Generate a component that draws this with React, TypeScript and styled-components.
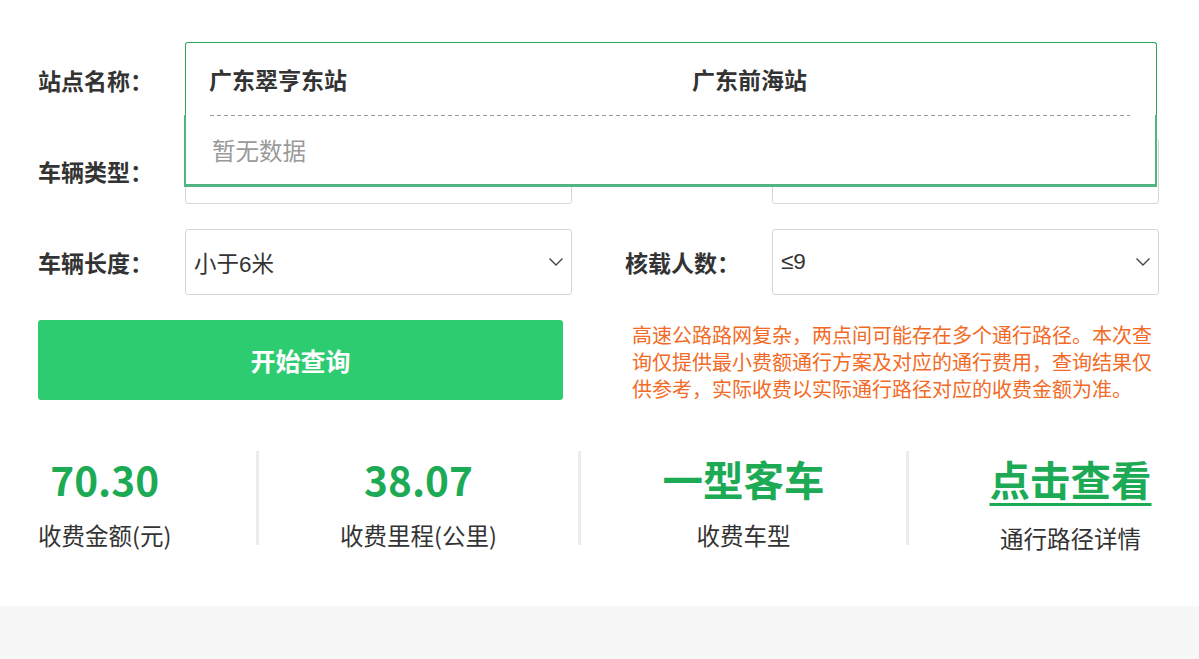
import React from "react";
import styled, { createGlobalStyle } from "styled-components";

const GlobalStyle = createGlobalStyle`
  html, body {
    margin: 0;
    padding: 0;
    background: #ffffff;
    overflow: hidden;
  }
  body {
    font-family: "Noto Sans CJK SC", "Noto Sans", sans-serif;
    color: #333333;
  }
`;

const Page = styled.div`
  width: 1199px;
  min-height: 659px;
  display: flex;
  flex-direction: column;
`;

const Main = styled.main`
  padding: 47px 0 56px 38px;
  display: flex;
  flex-direction: column;
`;

const Form = styled.div`
  display: flex;
  flex-direction: column;
  gap: 25px;
`;

const Row = styled.div`
  display: grid;
  grid-template-columns: 147px 387px 53px 147px 387px;
  align-items: center;
  height: 66px;
`;

const Label = styled.label<{ col?: number }>`
  grid-column: ${({ col }) => col ?? 1};
  font-size: 23px;
  font-weight: 700;
  color: #333333;
  white-space: nowrap;
`;

const StationWrap = styled.div`
  grid-column: 2 / 6;
  position: relative;
  height: 66px;
  width: 972px;
`;

const Dropdown = styled.div`
  position: absolute;
  top: -5px;
  left: 0;
  width: 972px;
  z-index: 5;
  background: #ffffff;
`;

const StationInput = styled.div`
  box-sizing: border-box;
  height: 73px;
  display: grid;
  grid-template-columns: 483px 1fr;
  align-items: center;
  padding-left: 23px;
  border: 1px solid #2aa65e;
  border-bottom: none;
  border-radius: 3px 3px 0 0;
`;

const StationName = styled.span`
  font-size: 23px;
  font-weight: 700;
  color: #333333;
`;

const StationList = styled.div`
  box-sizing: border-box;
  height: 72px;
  border: 2px solid #4fb482;
  border-top: none;
  border-bottom-width: 3px;
  margin-left: -1px;
  padding: 0 25px 0 24px;
  display: flex;
  flex-direction: column;
`;

const DashedLine = styled.div`
  height: 1px;
  background-image: linear-gradient(to right, #9a9a9a 60%, transparent 40%);
  background-size: 7px 1px;
`;

const Empty = styled.div`
  flex: 1;
  display: flex;
  align-items: center;
  padding-left: 2px;
  font-size: 23.5px;
  color: #9a9a9a;
`;

const Select = styled.div<{ col: number }>`
  grid-column: ${({ col }) => col};
  box-sizing: border-box;
  height: 66px;
  border: 1px solid #d6d6d6;
  border-radius: 3px;
  display: flex;
  align-items: center;
  justify-content: space-between;
  padding: 0 7px 0 8px;
  font-family: "Liberation Sans", "Noto Sans CJK SC", sans-serif;
  font-size: 22.5px;
  color: #333333;
  background: #ffffff;
`;

const Chevron = () => (
  <svg width="16" height="10" viewBox="0 0 16 10">
    <polyline
      points="1.5,1.5 8,8 14.5,1.5"
      fill="none"
      stroke="#444"
      strokeWidth="1.4"
    />
  </svg>
);

const ActionRow = styled.div`
  display: grid;
  grid-template-columns: 525px 528px;
  column-gap: 69px;
  margin-top: 25px;
  align-items: start;
`;

const QueryButton = styled.button`
  height: 80px;
  border: none;
  border-radius: 3px;
  background: #2ecc71;
  color: #ffffff;
  font-family: inherit;
  font-size: 25px;
  font-weight: 700;
  cursor: pointer;
`;

const Notice = styled.p`
  margin: 1px 0 0;
  font-size: 20px;
  line-height: 27px;
  color: #f26b26;
`;

const Stats = styled.div`
  display: flex;
  margin-top: 49px;
`;

const StatItem = styled.div<{ w: number; first?: boolean }>`
  box-sizing: border-box;
  flex: 0 0 ${({ w }) => w}px;
  height: 94px;
  display: flex;
  justify-content: ${({ first }) => (first ? "flex-start" : "center")};
  border-left: ${({ first }) => (first ? "none" : "3px solid #ececec")};
`;

const StatInner = styled.div`
  display: flex;
  flex-direction: column;
  align-items: center;
`;

const StatValue = styled.div<{ link?: boolean }>`
  font-size: 40.5px;
  line-height: 56px;
  font-weight: 700;
  color: #1daa55;
  white-space: nowrap;
  text-decoration: ${({ link }) => (link ? "underline" : "none")};
  text-decoration-thickness: 3px;
  text-underline-offset: 7px;
  cursor: ${({ link }) => (link ? "pointer" : "default")};
`;

const StatLabel = styled.div<{ shift?: number }>`
  margin-top: ${({ shift }) => 14 + (shift ?? 0)}px;
  font-size: 23.5px;
  line-height: 28px;
  color: #333333;
  white-space: nowrap;
`;

const Footer = styled.footer`
  margin-top: auto;
  height: 53px;
  background: #f7f7f7;
`;

const stats = [
  { value: "70.30", label: "收费金额(元)", w: 218 },
  { value: "38.07", label: "收费里程(公里)", w: 322 },
  { value: "一型客车", label: "收费车型", w: 328 },
  { value: "点击查看", label: "通行路径详情", w: 326, link: true },
];

export default function App() {
  return (
    <Page>
      <GlobalStyle />
      <Main>
        <Form>
          <Row>
            <Label>站点名称：</Label>
            <StationWrap>
              <Dropdown>
                <StationInput>
                  <StationName>广东翠亨东站</StationName>
                  <StationName>广东前海站</StationName>
                </StationInput>
                <StationList>
                  <DashedLine />
                  <Empty>暂无数据</Empty>
                </StationList>
              </Dropdown>
            </StationWrap>
          </Row>
          {/* this row sits under the open station dropdown */}
          <Row>
            <Label>车辆类型：</Label>
            <Select col={2}>
              <span />
              <Chevron />
            </Select>
            <Select col={5}>
              <span />
              <Chevron />
            </Select>
          </Row>
          <Row>
            <Label>车辆长度：</Label>
            <Select col={2}>
              <span>小于6米</span>
              <Chevron />
            </Select>
            <Label col={4}>核载人数：</Label>
            <Select col={5}>
              <span>≤9</span>
              <Chevron />
            </Select>
          </Row>
        </Form>

        <ActionRow>
          <QueryButton>开始查询</QueryButton>
          <Notice>
            高速公路路网复杂，两点间可能存在多个通行路径。本次查询仅提供最小费额通行方案及对应的通行费用，查询结果仅供参考，实际收费以实际通行路径对应的收费金额为准。
          </Notice>
        </ActionRow>

        <Stats>
          {stats.map((s, i) => (
            <StatItem key={s.label} w={s.w} first={i === 0}>
              <StatInner>
                <StatValue link={s.link}>{s.value}</StatValue>
                <StatLabel shift={s.link ? 3 : 0}>{s.label}</StatLabel>
              </StatInner>
            </StatItem>
          ))}
        </Stats>
      </Main>
      <Footer />
    </Page>
  );
}
